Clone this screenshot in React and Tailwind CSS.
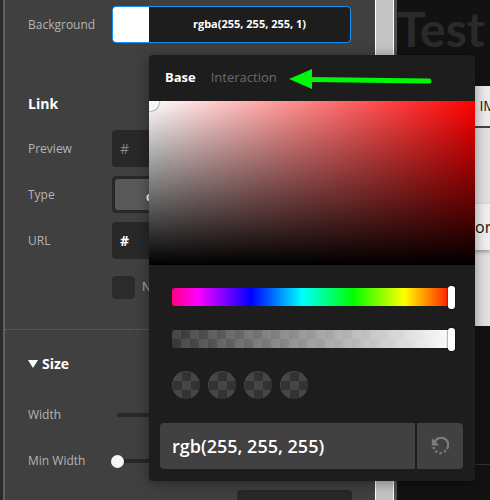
import React from 'react';

const label = 'w-[84px] shrink-0 text-xs text-[#b4b4b4]';
const field = 'h-[37px] w-full min-w-0 rounded bg-[#282828] px-2 text-sm outline-none';
const track =
  'h-[18px] w-full cursor-pointer appearance-none rounded-[3px] outline-none [&::-webkit-slider-thumb]:h-[23px] [&::-webkit-slider-thumb]:w-[7px] [&::-webkit-slider-thumb]:appearance-none [&::-webkit-slider-thumb]:rounded-[3px] [&::-webkit-slider-thumb]:bg-white [&::-webkit-slider-thumb]:shadow-[0_0_2px_#000]';

function SettingsPanel() {
  return (
    <section className="w-[372px] shrink-0 border-l-2 border-[#606060] bg-[#404040] pt-1.5">
      <div className="flex h-[37px] items-center pr-6 pl-[23px]">
        <label htmlFor="background" className={label}>Background</label>
        <div className="flex h-full min-w-0 flex-1 overflow-hidden rounded border border-[#1c8ff0] bg-[#1d1d1d]">
          <div className="w-9 shrink-0 bg-white" />
          <input id="background" className="w-full min-w-0 bg-transparent text-center text-[11px] font-bold text-white outline-none" defaultValue="rgba(255, 255, 255, 1)" />
        </div>
      </div>

      <h2 className="mt-[51px] px-[23px] text-sm leading-5 font-bold text-white">Link</h2>
      <div className="mt-4 flex flex-col gap-[9px] px-[23px]">
        <div className="flex items-center">
          <label htmlFor="preview" className={label}>Preview</label>
          <input id="preview" className={field + ' text-[#858585]'} defaultValue="#" />
        </div>
        <div className="flex items-center">
          <span className={label}>Type</span>
          <div className="flex h-[37px] min-w-0 flex-1 rounded bg-[#282828] p-[3px]">
            <button className="flex w-1/2 items-center rounded-[3px] bg-[#595959] pt-1 pl-[31px] text-xs font-bold text-white">content</button>
            <button className="w-1/2 text-xs text-[#b4b4b4]">page</button>
          </div>
        </div>
        <div className="flex items-center">
          <label htmlFor="url" className={label}>URL</label>
          <input id="url" className={field + ' font-bold text-white'} defaultValue="#" />
        </div>
      </div>
      <div className="mt-4 flex h-6 items-center pl-[107px]">
        <input id="new-tab" type="checkbox" className="size-[23px] appearance-none rounded bg-[#2b2b2b]" />
        <label htmlFor="new-tab" className="pl-[7px] text-xs text-[#b4b4b4]">New tab</label>
      </div>

      <div className="mt-[30px] border-t border-dotted border-[#666] px-[23px] pt-6">
        <h2 className="flex items-center gap-1 text-sm leading-5 font-bold text-white">
          <svg width="10" height="8" viewBox="0 0 10 8" fill="currentColor"><path d="M0 0h10L5 8z" /></svg>
          Size
        </h2>
        <div className="mt-[18px] flex h-[46px] items-center">
          <label htmlFor="width" className={label}>Width</label>
          <input id="width" type="range" defaultValue="0" className="ml-[5px] h-1 w-full appearance-none rounded bg-[#282828] [&::-webkit-slider-thumb]:appearance-none" />
        </div>
        <div className="flex h-[46px] items-center">
          <label htmlFor="min-width" className={label}>Min Width</label>
          <div className="relative flex h-4 flex-1 items-center">
            <div className="ml-[5px] h-1 flex-1 rounded bg-[#282828]" />
            <input id="min-width" type="range" defaultValue="0" className="absolute inset-0 -left-px w-full appearance-none bg-transparent [&::-webkit-slider-thumb]:size-[13px] [&::-webkit-slider-thumb]:appearance-none [&::-webkit-slider-thumb]:rounded-full [&::-webkit-slider-thumb]:bg-[#f7f7f7]" />
          </div>
        </div>
        <div className="mt-[6px] ml-auto h-[37px] w-[115px] rounded bg-[#282828]" />
      </div>
    </section>
  );
}

function SitePreview() {
  return (
    <main className="min-w-0 flex-1 overflow-hidden bg-[#121212]">
      <h1 className="h-[86px] text-5xl leading-[58px] font-bold text-[#2a2a2a] [font-family:Lato,sans-serif]">Test</h1>
      <div className="flex h-10 items-center bg-[#ececec] pl-[71px] text-sm whitespace-nowrap text-[#111] [font-family:'Open_Sans',sans-serif]">E IM</div>
      <div className="h-[200px] border-t-2 border-[#444] bg-[#e2e2e2] pt-[76px]">
        <button className="h-[46px] w-full bg-[#f0f0f0] pl-[78px] text-left text-base text-[#111] shadow-[0_2px_4px_#999]">or</button>
      </div>
      <div className="h-[139px] border-b border-[#303030]" />
    </main>
  );
}

function ColorPicker() {
  return (
    <div className="absolute top-[55px] left-[149px] w-[326px] overflow-hidden rounded bg-[#1d1d1d] shadow-[0_2px_14px_#0006]">
      <div className="relative flex h-[46px] items-center gap-[15px] px-4 text-[13px]">
        <button className="font-bold text-white">Base</button>
        <button className="font-medium text-[#6b6b6b]">Interaction</button>
        <svg className="absolute top-3 left-[140px]" width="145" height="24" viewBox="0 0 145 24">
          <path d="M20 12.5 140 14" stroke="#00f808" strokeWidth="5" strokeLinecap="round" />
          <path d="M0 12 23 2v20z" fill="#00f808" />
        </svg>
      </div>
      <div className="relative h-[164px] overflow-hidden bg-[linear-gradient(to_top,#000,transparent),linear-gradient(to_right,#fff,#f00)]">
        <div className="absolute -top-[9px] -left-[9px] size-[19px] rounded-full border-2 border-white shadow-[0_0_2px_#000]" />
      </div>
      <div className="px-[23px] pt-[23px]">
        <div className="-mr-[6px] flex w-[283px] flex-col gap-6">
          <input aria-label="Hue" type="range" min="0" max="100" defaultValue="100" className={track + ' bg-[linear-gradient(to_right,#ff0080,#f0f_9%,#00f_28%,#0ff_46%,#0f0_64%,#ff0_82%,#f00)]'} />
          <input aria-label="Opacity" type="range" min="0" max="100" defaultValue="100" className={track + ' bg-[linear-gradient(to_right,transparent,#fff),repeating-conic-gradient(#363636_0_25%,#464646_0_50%)] bg-[length:100%_100%,18px_18px]'} />
        </div>
        <div className="mt-[23px] flex gap-2">
          {[1, 2, 3, 4].map((n) => (
            <button key={n} aria-label={`Swatch ${n}`} className="size-7 rounded-full bg-[repeating-conic-gradient(#333_0_25%,#464646_0_50%)] bg-[length:18px_18px] bg-[position:10px_10px]" />
          ))}
        </div>
      </div>
      <div className="mt-6 mb-3 flex h-[46px] gap-0.5 pr-3 pl-[11px]">
        <input aria-label="Color value" defaultValue="rgb(255, 255, 255)" className="min-w-0 flex-1 rounded-l bg-[#414141] px-3 text-lg font-semibold text-white outline-none" />
        <button aria-label="Reset" className="flex w-[46px] items-center justify-center rounded-r bg-[#414141] text-[#7c7c7c]">
          <svg width="18" height="18" viewBox="0 0 18 18" fill="none" stroke="currentColor" strokeWidth="2.4">
            <path d="M3.6 5.6A7 7 0 1 1 15.8 12" />
            <path d="M14.8 13.4 13.2 15M10.8 16.1H8.4M6.1 15.4 4.3 14M3.1 12.2 2.4 10" />
            <path d="M.8 1v7.6h7.4z" fill="currentColor" stroke="none" />
          </svg>
        </button>
      </div>
    </div>
  );
}

export default function App() {
  return (
    <div className="relative flex h-screen overflow-hidden bg-[#2b2b2b] pl-[3px] [font-family:'Open_Sans','Noto_Sans',sans-serif]">
      <SettingsPanel />
      <div className="w-[19px] shrink-0 border-x border-white bg-[#c4c4c4]" />
      <div className="w-[3px] shrink-0 bg-[#505050]" />
      <SitePreview />
      <ColorPicker />
    </div>
  );
}
